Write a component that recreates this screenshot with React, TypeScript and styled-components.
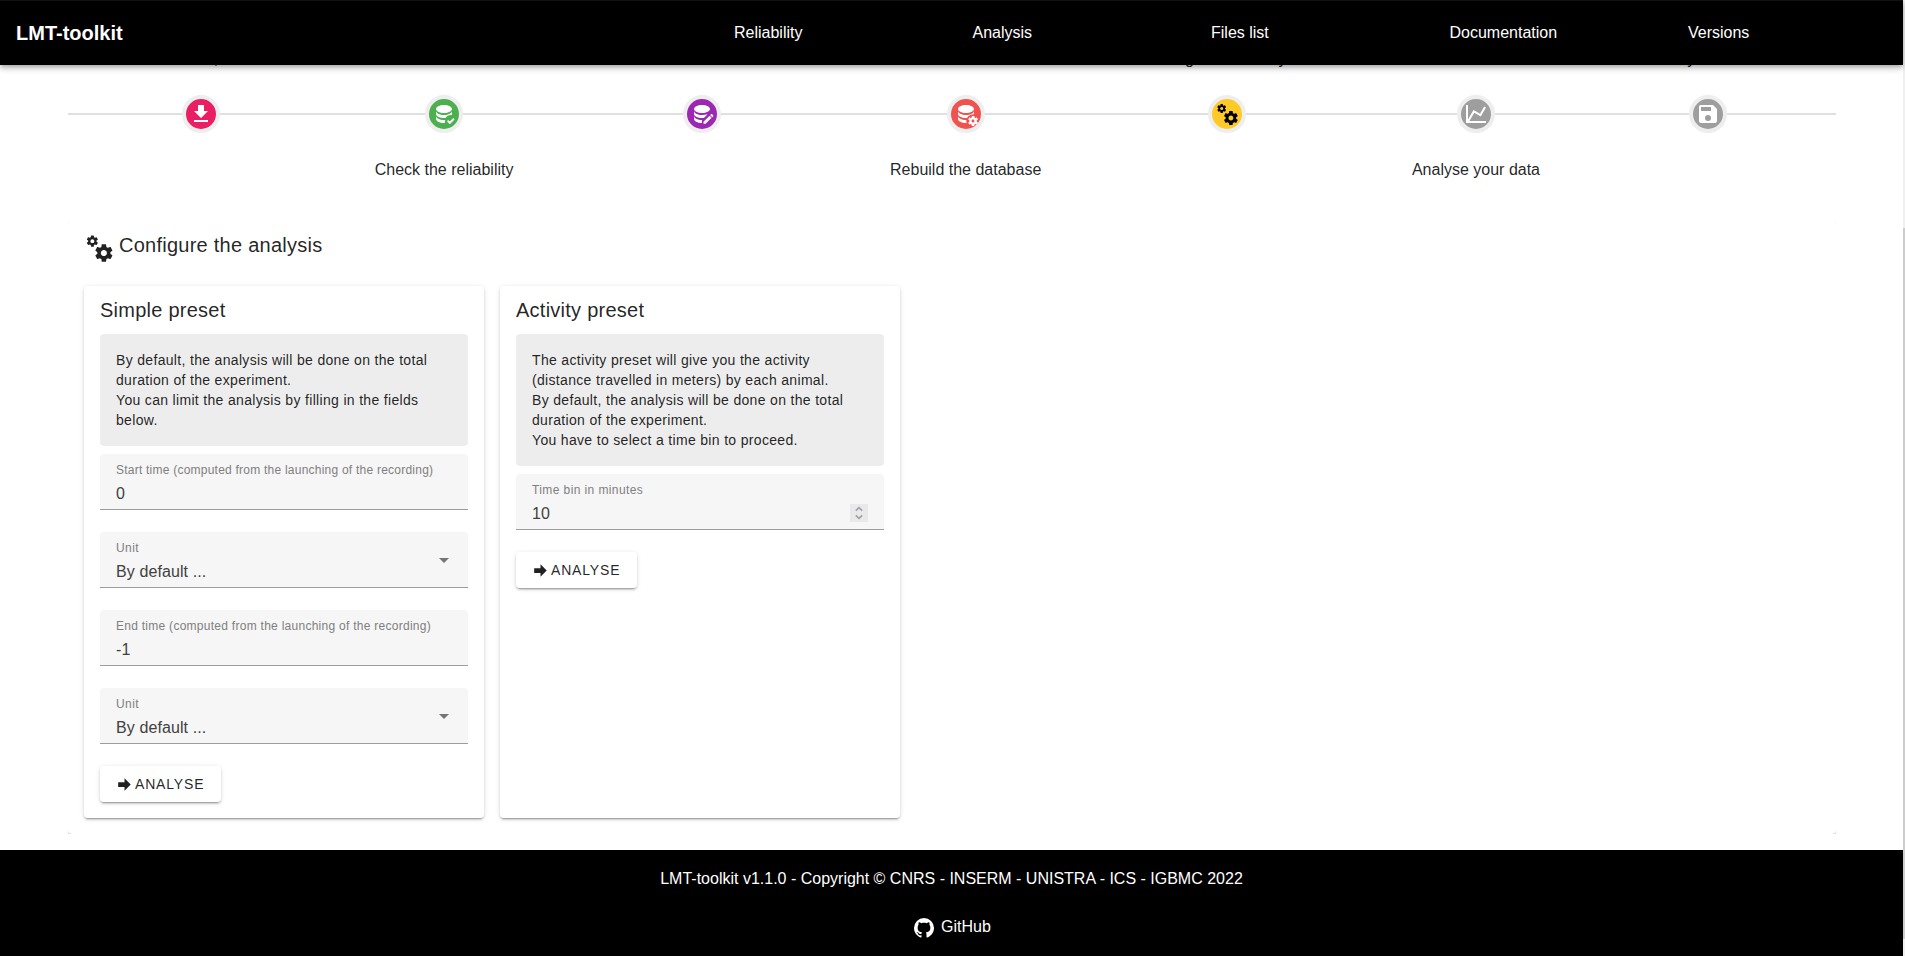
import React from 'react';
import styled, { createGlobalStyle } from 'styled-components';

const Global = createGlobalStyle`
  * { box-sizing: border-box; }
  html, body { margin: 0; padding: 0; overflow: hidden; }
  body { font-family: "Liberation Sans", Arial, sans-serif; font-size: 16px; line-height: 24px; color: rgba(0,0,0,.87); background: #fff; }
`;

const icons = {
  download: 'M5,20H19V18H5M19,9H15V3H9V9H5L12,16L19,9Z',
  check: 'M12 3C7.58 3 4 4.79 4 7S7.58 11 12 11 20 9.21 20 7 16.42 3 12 3M4 9V12C4 14.21 7.58 16 12 16C12.5 16 13 16 13.5 15.93C14.5 14.1 16.6 13 19 13C19.3 13 19.5 13 19.8 13.04C19.94 12.71 20 12.36 20 12V9C20 11.21 16.42 13 12 13S4 11.21 4 9M4 14V17C4 19.21 7.58 21 12 21L13.1 20.96C13 20.5 13 20.2 13 19.7C13 19 13.1 18.5 13.2 17.95L12 18C7.58 18 4 16.21 4 14M17.75 22.16L15 19.16L16.16 18L17.75 19.59L21.34 16L22.5 17.41L17.75 22.16',
  edit: 'M12 3C7.58 3 4 4.79 4 7S7.58 11 12 11 20 9.21 20 7 16.42 3 12 3M4 9V12C4 14.21 7.58 16 12 16C12.65 16 13.28 15.96 13.88 15.89L17.6 12.2C16 12.7 14.1 13 12 13C7.58 13 4 11.21 4 9M4 14V17C4 19.21 7.58 21 12 21V17.99C7.58 18 4 16.21 4 14M21.2 12.1L20.2 13.1L22.25 15.15L23.25 14.15C23.46 13.94 23.46 13.59 23.25 13.38L21.97 12.1C21.76 11.89 21.41 11.89 21.2 12.1M19.6 13.7L13.5 19.8V21.85H15.55L21.65 15.75Z',
  db: 'M12 3C7.58 3 4 4.79 4 7S7.58 11 12 11 20 9.21 20 7 16.42 3 12 3M4 9V12C4 14.21 7.58 16 12 16C12.4 16 12.7 16 13.1 15.96C14.2 14 16 12.8 18.5 12.6C19.4 12.2 20 12.2 20 12V9C20 11.21 16.42 13 12 13S4 11.21 4 9M4 14V17C4 19.21 7.58 21 12 21L12.8 20.96C12.2 19.9 12.1 18.9 12.3 18H12C7.58 18 4 16.21 4 14M23.8 20.4L22.7 19.5C22.8 19.2 22.8 18.8 22.7 18.5L23.8 17.6C23.9 17.5 23.9 17.4 23.9 17.3L22.9 15.6C22.8 15.5 22.7 15.4 22.6 15.5L21.4 16C21.1 15.8 20.9 15.7 20.6 15.5L20.4 14.2C20.4 14.1 20.3 14 20.1 14H18.1C18 14 17.9 14.1 17.9 14.2L17.7 15.5C17.4 15.7 17.1 15.8 16.9 16L15.6 15.5C15.5 15.5 15.4 15.5 15.3 15.6L14.3 17.3C14.2 17.4 14.2 17.5 14.4 17.6L15.5 18.5V19.5L14.4 20.4C14.3 20.5 14.3 20.6 14.3 20.7L15.3 22.4C15.4 22.5 15.5 22.5 15.6 22.5L16.8 22C17.1 22.2 17.3 22.4 17.6 22.5L17.8 23.8C17.8 23.9 17.9 24 18.1 24H20.1C20.2 24 20.3 23.9 20.3 23.8L20.5 22.5C20.8 22.4 21.1 22.2 21.3 22L22.5 22.5C22.6 22.5 22.7 22.5 22.8 22.4L23.8 20.7C23.9 20.6 23.9 20.5 23.8 20.4M19 20.5C18.2 20.5 17.5 19.8 17.5 19S18.2 17.5 19 17.5 20.5 18.2 20.5 19 19.8 20.5 19 20.5Z',
  cogs: 'M15.9,18.45C17.25,18.45 18.35,17.35 18.35,16C18.35,14.65 17.25,13.55 15.9,13.55C14.54,13.55 13.45,14.65 13.45,16C13.45,17.35 14.54,18.45 15.9,18.45M21.1,16.68L22.58,17.84C22.71,17.95 22.75,18.13 22.66,18.29L21.26,20.71C21.17,20.86 21,20.92 20.83,20.86L19.09,20.16C18.73,20.44 18.33,20.67 17.91,20.85L17.64,22.7C17.62,22.87 17.47,23 17.3,23H14.5C14.32,23 14.18,22.87 14.15,22.7L13.89,20.85C13.46,20.67 13.07,20.44 12.71,20.16L10.96,20.86C10.81,20.92 10.62,20.86 10.54,20.71L9.14,18.29C9.05,18.13 9.09,17.95 9.22,17.84L10.7,16.68L10.65,16L10.7,15.31L9.22,14.16C9.09,14.05 9.05,13.86 9.14,13.71L10.54,11.29C10.62,11.13 10.81,11.07 10.96,11.13L12.71,11.84C13.07,11.56 13.46,11.32 13.89,11.15L14.15,9.29C14.18,9.13 14.32,9 14.5,9H17.3C17.47,9 17.62,9.13 17.64,9.29L17.91,11.15C18.33,11.32 18.73,11.56 19.09,11.84L20.83,11.13C21,11.07 21.17,11.13 21.26,11.29L22.66,13.71C22.75,13.86 22.71,14.05 22.58,14.16L21.1,15.31L21.15,16L21.1,16.68M6.69,8.07C7.56,8.07 8.26,7.37 8.26,6.5C8.26,5.63 7.56,4.92 6.69,4.92A1.58,1.58 0 0,0 5.11,6.5C5.11,7.37 5.82,8.07 6.69,8.07M10.03,6.94L11,7.68C11.07,7.75 11.09,7.87 11.03,7.97L10.13,9.53C10.08,9.63 9.96,9.67 9.86,9.63L8.74,9.18L8,9.62L7.81,10.81C7.79,10.92 7.7,11 7.59,11H5.79C5.67,11 5.58,10.92 5.56,10.81L5.4,9.62L4.64,9.18L3.5,9.63C3.41,9.67 3.3,9.63 3.24,9.53L2.34,7.97C2.28,7.87 2.31,7.75 2.39,7.68L3.34,6.94L3.31,6.5L3.34,6.06L2.39,5.32C2.31,5.25 2.28,5.13 2.34,5.03L3.24,3.47C3.3,3.37 3.41,3.33 3.5,3.37L4.63,3.82L5.4,3.38L5.56,2.19C5.58,2.08 5.67,2 5.79,2H7.59C7.7,2 7.79,2.08 7.81,2.19L8,3.38L8.74,3.82L9.86,3.37C9.96,3.33 10.08,3.37 10.13,3.47L11.03,5.03C11.09,5.13 11.07,5.25 11,5.32L10.03,6.06L10.06,6.5L10.03,6.94Z',
  chart: 'M16,11.78L20.24,4.45L21.97,5.45L16.74,14.5L10.23,10.75L5.46,19H22V21H2V3H4V17.54L9.5,8L16,11.78Z',
  save: 'M15,9H5V5H15M12,19A3,3 0 0,1 9,16A3,3 0 0,1 12,13A3,3 0 0,1 15,16A3,3 0 0,1 12,19M17,3H5C3.89,3 3,3.9 3,5V19A2,2 0 0,0 5,21H19A2,2 0 0,0 21,19V7L17,3Z',
  arrow: 'M4,15V9H12V4.16L19.84,12L12,19.84V15H4Z',
  menuDown: 'M7,10L12,15L17,10H7Z',
  github: 'M12,2A10,10 0 0,0 2,12C2,16.42 4.87,20.17 8.84,21.5C9.34,21.58 9.5,21.27 9.5,21C9.5,20.77 9.5,20.14 9.5,19.31C6.73,19.91 6.14,17.97 6.14,17.97C5.68,16.81 5.03,16.5 5.03,16.5C4.12,15.88 5.1,15.9 5.1,15.9C6.1,15.97 6.63,16.93 6.63,16.93C7.5,18.45 8.97,18 9.54,17.76C9.63,17.11 9.89,16.67 10.17,16.42C7.95,16.17 5.62,15.31 5.62,11.5C5.62,10.39 6,9.5 6.65,8.79C6.55,8.54 6.2,7.5 6.75,6.15C6.75,6.15 7.59,5.88 9.5,7.17C10.29,6.95 11.15,6.84 12,6.84C12.85,6.84 13.71,6.95 14.5,7.17C16.41,5.88 17.25,6.15 17.25,6.15C17.8,7.5 17.45,8.54 17.35,8.79C18,9.5 18.38,10.39 18.38,11.5C18.38,15.32 16.04,16.16 13.81,16.41C14.17,16.72 14.5,17.33 14.5,18.26C14.5,19.6 14.5,20.68 14.5,21C14.5,21.27 14.66,21.59 15.17,21.5C19.14,20.16 22,16.42 22,12A10,10 0 0,0 12,2Z',
};
type IconName = keyof typeof icons;

const Svg = styled.svg<{ $size: number }>`
  display: block; flex: none; fill: currentColor;
  width: ${p => p.$size}px; height: ${p => p.$size}px;
`;
const Icon = ({ name, size = 24 }: { name: IconName; size?: number }) => (
  <Svg $size={size} viewBox="0 0 24 24" aria-hidden="true"><path d={icons[name]} /></Svg>
);

const Page = styled.div`
  display: flex; height: 956px; overflow: hidden;
`;
const Column = styled.div`
  flex: 1; min-width: 0; display: flex; flex-direction: column;
`;
const ScrollTrack = styled.div`
  width: 2px; background: #f0f0f0; padding-top: 228px;
`;
const ScrollThumb = styled.div`
  height: 711px; background: #cdcdcd;
`;
const Header = styled.header`
  position: relative; z-index: 2; flex: none; height: 65px; padding: 0 0 1px 16px;
  display: grid; grid-template-columns: 718px repeat(5, 238.5px); align-items: center;
  background: #000; color: #fff; border-top: 1px solid #121212;
  box-shadow: 0 2px 4px -1px rgba(0,0,0,.2), 0 4px 5px rgba(0,0,0,.14), 0 1px 10px rgba(0,0,0,.12);
`;
const Brand = styled.h1`
  margin: 0; font-size: 20px; line-height: 28px; font-weight: 700;
`;
const NavLink = styled.a`
  color: #fff;
`;
const Main = styled.main`
  flex: none; height: 785px; padding: 0 67px 0 68px;
`;
const Timeline = styled.div`
  display: grid; grid-template-columns: 265.6px 221px 294.8px 232.6px 289.8px 208.4px 1fr;
  height: 157px; margin-top: -18px;
`;
const Step = styled.div`
  display: grid; grid-template-rows: 24px 86px 25px; justify-items: stretch;
`;
const StepLabel = styled.div<{ $bottom?: boolean }>`
  grid-row: ${p => (p.$bottom ? 3 : 1)}; padding-top: ${p => (p.$bottom ? 1 : 0)}px;
  text-align: center; white-space: nowrap;
`;
const Rail = styled.div`
  grid-row: 2; display: flex; align-items: center; margin-top: -1px;
  &::before, &::after { content: ""; flex: 1; height: 2px; background: #e0e0e0; }
`;
const Dot = styled.div<{ $bg: string; $fg: string }>`
  width: 38px; height: 38px; border: 4px solid #eee; border-radius: 50%;
  display: flex; align-items: center; justify-content: center;
  background: ${p => p.$bg}; color: ${p => p.$fg};
`;
const PanelClip = styled.div`
  margin-top: 17px; overflow: hidden;
`;
const elevation = '0 3px 1px -2px rgba(0,0,0,.2), 0 2px 2px rgba(0,0,0,.14), 0 1px 5px rgba(0,0,0,.12)';
const Panel = styled.section`
  height: 613px; padding: 8px 16px 16px; border-radius: 4px; background: #fff; box-shadow: ${elevation};
`;
const PanelTitle = styled.h2`
  display: flex; gap: 5px; margin: 0; height: 57px;
  font-size: 20px; line-height: 32px; font-weight: 400; letter-spacing: .25px;
`;
const TitleIcon = styled.span`
  padding-top: 4px; display: block;
`;
const Cards = styled.div`
  display: flex; gap: 16px; height: 532px;
`;
const Card = styled.article`
  width: 400px; padding: 8px 16px; border-radius: 4px; background: #fff; box-shadow: ${elevation};
`;
const CardTitle = styled.h3`
  margin: 0 0 8px; font-size: 20px; line-height: 32px; font-weight: 400; letter-spacing: .25px;
`;
const Alert = styled.div`
  padding: 16px; margin-bottom: 8px; border-radius: 4px; background: #ededed;
  font-size: 14px; line-height: 20px; letter-spacing: .325px;
`;
const FieldBox = styled.div`
  display: flex; align-items: center; justify-content: space-between;
  height: 56px; margin-bottom: 22px; padding: 0 16px;
  background: #f6f6f6; border-radius: 4px 4px 0 0; border-bottom: 1px solid #9c9c9c;
`;
const FieldText = styled.div`
  align-self: stretch; display: flex; flex-direction: column; padding-top: 7px;
`;
const FieldLabel = styled.span<{ $tracking: number }>`
  font-size: 12px; line-height: 18px; letter-spacing: ${p => p.$tracking}px; color: #7f7f7f; white-space: nowrap;
`;
const FieldValue = styled.span`
  line-height: 24px; padding-top: 3px; letter-spacing: .1px; color: #414141;
`;
const Caret = styled.span`
  color: #757575; margin-right: -3.5px;
`;
const Spinner = styled.span`
  width: 18px; height: 18px; margin-top: 23px; background: #e9e9ea;
`;
const SpinnerSvg = styled.svg`
  display: block; width: 18px; height: 18px; fill: none; stroke: #a0a0a8; stroke-width: 1.6;
`;
const Button = styled.button`
  display: flex; align-items: center; gap: 1px; width: 121px; height: 36px; padding: 0 0 0 15px; border: 0; border-radius: 4px;
  background: #fff; color: rgba(0,0,0,.87); font: 400 14px "Liberation Sans", Arial, sans-serif; letter-spacing: .82px;
  box-shadow: ${elevation};
`;
const Footer = styled.footer`
  flex: 1; display: flex; flex-direction: column; align-items: center; gap: 24px; padding-top: 17px;
  background: #000; color: #fff;
`;
const FooterLink = styled.a`
  display: flex; align-items: flex-start; gap: 5px; color: #fff;
`;
const FooterIcon = styled.span`
  padding-top: 1px;
`;

const steps: { name: IconName; label: string; bg: string; fg?: string }[] = [
  { name: 'download', label: 'Select files, load it', bg: '#e91e63' },
  { name: 'check', label: 'Check the reliability', bg: '#4caf50' },
  { name: 'edit', label: '', bg: '#9c27b0' },
  { name: 'db', label: 'Rebuild the database', bg: '#ef5350' },
  { name: 'cogs', label: 'Configure the analysis', bg: '#ffca28', fg: '#000' },
  { name: 'chart', label: 'Analyse your data', bg: '#9e9e9e' },
  { name: 'save', label: 'Save your results', bg: '#9e9e9e' },
];

type FieldProps = { label: string; value: string; kind?: 'select' | 'number'; tracking?: number };
const Field = ({ label, value, kind, tracking = 0.4 }: FieldProps) => (
  <FieldBox>
    <FieldText>
      <FieldLabel $tracking={tracking}>{label}</FieldLabel>
      <FieldValue>{value}</FieldValue>
    </FieldText>
    {kind === 'select' && <Caret><Icon name="menuDown" /></Caret>}
    {kind === 'number' && (
      <Spinner><SpinnerSvg viewBox="0 0 18 18"><path d="M5.8 6.7L9 3.7L12.2 6.7M5.8 11.3L9 14.3L12.2 11.3" /></SpinnerSvg></Spinner>
    )}
  </FieldBox>
);
const Analyse = () => <Button><Icon name="arrow" size={19} />ANALYSE</Button>;

export default function App() {
  return (
    <>
      <Global />
      <Page>
        <Column>
          <Header>
            <Brand>LMT-toolkit</Brand>
            {['Reliability', 'Analysis', 'Files list', 'Documentation', 'Versions'].map(t => <NavLink key={t}>{t}</NavLink>)}
          </Header>
          <Main>
            <Timeline>
              {steps.map((s, i) => (
                <Step key={s.name}>
                  <StepLabel $bottom={i % 2 === 1}>{s.label}</StepLabel>
                  <Rail><Dot $bg={s.bg} $fg={s.fg ?? '#fff'}><Icon name={s.name} /></Dot></Rail>
                </Step>
              ))}
            </Timeline>
            <PanelClip>
              <Panel>
                <PanelTitle><TitleIcon><Icon name="cogs" size={30} /></TitleIcon>Configure the analysis</PanelTitle>
                <Cards>
                  <Card>
                    <CardTitle>Simple preset</CardTitle>
                    <Alert>
                      By default, the analysis will be done on the total duration of the experiment.<br />
                      You can limit the analysis by filling in the fields below.
                    </Alert>
                    <Field label="Start time (computed from the launching of the recording)" value="0" tracking={0.23} />
                    <Field label="Unit" value="By default ..." kind="select" />
                    <Field label="End time (computed from the launching of the recording)" value="-1" tracking={0.27} />
                    <Field label="Unit" value="By default ..." kind="select" />
                    <Analyse />
                  </Card>
                  <Card>
                    <CardTitle>Activity preset</CardTitle>
                    <Alert>
                      The activity preset will give you the activity (distance travelled in meters) by each animal.<br />
                      By default, the analysis will be done on the total duration of the experiment.<br />
                      You have to select a time bin to proceed.
                    </Alert>
                    <Field label="Time bin in minutes" value="10" kind="number" />
                    <Analyse />
                  </Card>
                </Cards>
              </Panel>
            </PanelClip>
          </Main>
          <Footer>
            <span>LMT-toolkit v1.1.0 - Copyright © CNRS - INSERM - UNISTRA - ICS - IGBMC 2022</span>
            <FooterLink><FooterIcon><Icon name="github" /></FooterIcon>GitHub</FooterLink>
          </Footer>
        </Column>
        <ScrollTrack><ScrollThumb /></ScrollTrack>
      </Page>
    </>
  );
}
